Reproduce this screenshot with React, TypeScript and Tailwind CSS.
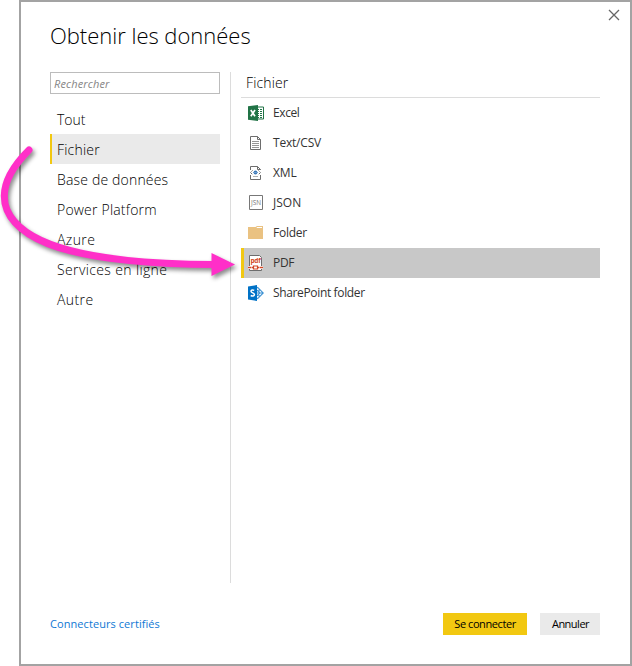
import React from "react";

const categories = [
  { label: "Tout", spacing: "tracking-normal" },
  { label: "Fichier", spacing: "tracking-[0.2px]", selected: true },
  { label: "Base de données", spacing: "tracking-[0.17px]" },
  { label: "Power Platform", spacing: "tracking-[0.2px]" },
  { label: "Azure", spacing: "tracking-[0.4px]" },
  { label: "Services en ligne", spacing: "tracking-[0.37px]" },
  { label: "Autre", spacing: "tracking-[0.4px]" },
];

function ExcelIcon() {
  return (
    <svg width="16" height="16" viewBox="0 0 16 16">
      <path d="M8 2h7.5v12H8z" fill="#fff" stroke="#217346" />
      <path d="M9 4.5h2M12 4.5h2M9 6.5h2M12 6.5h2M9 8.5h2M12 8.5h2M9 10.5h2M12 10.5h2M9 12.5h2M12 12.5h2" stroke="#217346" />
      <path d="M0 1.3L10 0v16L0 14.7z" fill="#217346" />
      <path d="M2.8 5l4.2 6.2M7 5l-4.2 6.2" stroke="#fff" strokeWidth="1.7" />
    </svg>
  );
}

function TextIcon() {
  return (
    <svg width="16" height="16" viewBox="0 0 16 16" fill="none" stroke="#6d6d6d">
      <path d="M2.5 1.5h7l3 3v10h-10zM9.5 1.5v3h3" />
      <path d="M4 6.5h7M4 8.5h7M4 10.5h7M4 12.5h7" stroke="#969696" />
    </svg>
  );
}

function XmlIcon() {
  return (
    <svg width="16" height="16" viewBox="0 0 16 16" fill="none" stroke="#6d6d6d">
      <path d="M2.5 5V1.5h7l3 3V5M9.5 1.5v3h3M2.5 10v4.500h10V10" />
      <path d="M4.500 5.500l-2 2 2 2M10.500 5.500l2 2-2 2" stroke="#555" strokeDasharray="1.2 .6" />
      <circle cx="7.500" cy="7.500" r="1.900" fill="#3d7ab8" stroke="none" />
      <path d="M5 7.500h5" stroke="#6d9dce" />
      <path d="M5 11.500h5" stroke="#b0b0b0" />
    </svg>
  );
}

function JsonIcon() {
  return (
    <svg width="16" height="16" viewBox="0 0 16 16">
      <path d="M1.5.5h13v14h-13z" fill="#fff" stroke="#777" />
      <text x="3" y="10" fontSize="6.5" textLength="10" lengthAdjust="spacingAndGlyphs" fill="#777" fontFamily="Open Sans, sans-serif">JSN</text>
    </svg>
  );
}

function FolderIcon() {
  return (
    <svg width="16" height="16" viewBox="0 0 16 16">
      <path d="M0 2h7.500L9 1h6v13H0z" fill="#eac282" />
      <path d="M9 2h5v1H8.500z" fill="#fff" />
    </svg>
  );
}

function PdfIcon() {
  return (
    <svg width="16" height="16" viewBox="0 0 16 16">
      <path d="M1.500.5h10l2 2v13h-12z" fill="#fff" stroke="#6d6d6d" />
      <path d="M0 11h15v3H0z" fill="#fff" />
      <text x="2.500" y="7.800" fontSize="7" fontWeight="700" textLength="10" lengthAdjust="spacingAndGlyphs" fill="#d24726" fontFamily="Open Sans, sans-serif">pdf</text>
      <path d="M0 12.500h3.500M4 12.500h1.500M9.500 12.500h1.500M11.500 12.500H15" stroke="#d24726" strokeWidth="1.300" />
      <path d="M5.500 11h4v3h-4z" fill="#fff" stroke="#d24726" strokeWidth="1.200" />
    </svg>
  );
}

function SharePointIcon() {
  return (
    <svg width="16" height="16" viewBox="0 0 16 16">
      <path d="M8.500 3.200l1.200-.8 5.600 5.600-5.600 5.600-1.200-.8M9 5.200l3 2.800-3 2.800M9 8h6M11 4.500v7" fill="none" stroke="#3c91d3" strokeWidth="1.1" />
      <path d="M0 1.600L9 0v16L0 14.400z" fill="#0072c6" />
      <path d="M6.200 5.400C4.800 4.700 3 4.900 3 6.300c0 1.800 3.400 1.300 3.400 3.200 0 1.600-2 1.800-3.700 1" fill="none" stroke="#fff" strokeWidth="1.5" />
    </svg>
  );
}

const sources = [
  { label: "Excel", Icon: ExcelIcon, spacing: "tracking-[-0.4px]" },
  { label: "Text/CSV", Icon: TextIcon, spacing: "tracking-[-0.2px]" },
  { label: "XML", Icon: XmlIcon, spacing: "tracking-[-0.1px]" },
  { label: "JSON", Icon: JsonIcon, spacing: "tracking-normal" },
  { label: "Folder", Icon: FolderIcon, spacing: "tracking-[-0.25px]" },
  { label: "PDF", Icon: PdfIcon, selected: true, spacing: "tracking-[-0.3px]" },
  { label: "SharePoint folder", Icon: SharePointIcon, spacing: "tracking-[-0.35px]" },
];

export default function App() {
  return (
    <div className="relative h-[666px] w-[632px] overflow-hidden bg-white pl-[19px] font-['Open_Sans',sans-serif] text-black">
      <main className="flex h-full flex-col border-2 border-[#a3a3a3] pl-[29px] pr-[30px]">
        <header className="flex h-[70px] items-start justify-between">
          <h1 className="mt-[17px] whitespace-nowrap text-[22px] font-light leading-8 tracking-[-0.02px]">Obtenir les données</h1>
          <button aria-label="Fermer" className="-mr-[20px] mt-[7px]">
            <svg width="12" height="12" viewBox="0 0 12 12" className="block">
              <path d="M1 1l10 10M11 1L1 11" stroke="#666" strokeWidth="1.3" />
            </svg>
          </button>
        </header>
        <div className="flex h-[511px]">
          <nav className="w-[170px]">
            <input
              placeholder="Rechercher"
              className="mb-[10px] block h-[22px] w-full border border-[#bcbcbc] px-[3px] text-[11px] italic tracking-[0.15px] outline-none placeholder:text-[#858585]"
            />
            {categories.map((c) => (
              <div
                key={c.label}
                className={`flex h-[30px] items-center whitespace-nowrap border-l-2 pl-[5px] text-[14px] font-light ${c.spacing} ${c.selected ? "border-[#f2c811] bg-[#eaeaea]" : "border-transparent"}`}
              >
                {c.label}
              </div>
            ))}
          </nav>
          <div className="ml-[10px] w-px bg-[#dcdcdc]" />
          <section className="ml-[10px] flex-1">
            <h2 className="flex h-[26px] items-center border-b border-[#dcdcdc] pb-[5px] pl-[5px] text-[14px] font-light tracking-[0.15px]">Fichier</h2>
            {sources.map(({ label, Icon, selected, spacing }) => (
              <div
                key={label}
                className={`flex h-[30px] items-center gap-[9px] whitespace-nowrap border-l-[3px] pl-1 text-[12px] text-[#333] ${spacing} ${selected ? "border-[#f2c811] bg-[#c8c8c8]" : "border-transparent"}`}
              >
                <Icon />
                <span>{label}</span>
              </div>
            ))}
          </section>
        </div>
        <footer className="mt-[30px] flex h-[22px] items-center text-[11px]">
          <a className="mr-auto tracking-[0.07px] text-[#0f78d4]">Connecteurs certifiés</a>
          <button className="h-[22px] w-[84px] whitespace-nowrap bg-[#f2c811] tracking-[-0.42px]">Se connecter</button>
          <button className="ml-[13px] h-[22px] w-[60px] bg-[#eaeaea] pl-px tracking-[-0.5px]">Annuler</button>
        </footer>
      </main>
      <svg className="absolute left-0 top-[130px] drop-shadow-[2px_3px_2px_rgba(0,0,0,0.45)]" width="245" height="160" viewBox="0 130 245 160">
        <path d="M29 150C9 170-1 190 7 210C23 247 92 264 214 264.500" fill="none" stroke="#ff2fc8" strokeWidth="7" strokeLinecap="round" />
        <path d="M211.500 253L235 264.500L211.500 276z" fill="#ff2fc8" />
      </svg>
    </div>
  );
}
